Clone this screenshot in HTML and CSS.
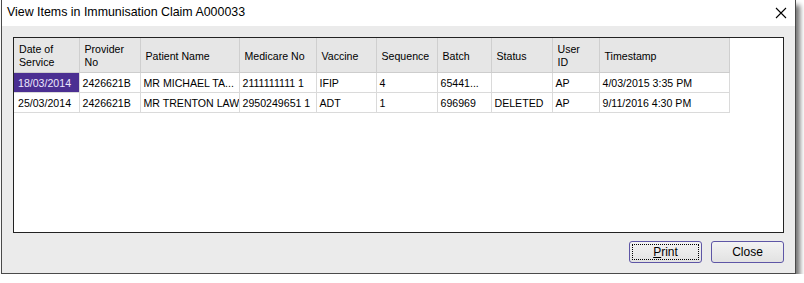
FILE: index.html
```html
<!DOCTYPE html>
<html>
<head>
  <title>View Items in Immunisation Claim A000033</title>
  <link rel="stylesheet" href="styles.css">
</head>
<body>
  <div id="window">
    <div id="titlebar">
      <span class="title">View Items in Immunisation Claim A000033</span>
      <svg class="close-x" width="12" height="12" viewBox="0 0 12 12">
        <path d="M1 1 L11 11 M11 1 L1 11" stroke="#000" stroke-width="1.1" fill="none"/>
      </svg>
    </div>
    <div id="client">
      <div id="list">
        <table id="items">
          <colgroup>
            <col style="width:65px"><col style="width:61px"><col style="width:99px"><col style="width:77px">
            <col style="width:60px"><col style="width:61px"><col style="width:54px"><col style="width:61px">
            <col style="width:47px"><col style="width:130px">
          </colgroup>
          <thead>
            <tr>
              <th>Date of<br>Service</th>
              <th>Provider<br>No</th>
              <th>Patient Name</th>
              <th>Medicare No</th>
              <th>Vaccine</th>
              <th>Sequence</th>
              <th>Batch</th>
              <th>Status</th>
              <th>User<br>ID</th>
              <th>Timestamp</th>
            </tr>
          </thead>
          <tbody>
            <tr>
              <td class="selected">18/03/2014</td>
              <td>2426621B</td>
              <td>MR MICHAEL TA...</td>
              <td>2111111111 1</td>
              <td>IFIP</td>
              <td>4</td>
              <td>65441...</td>
              <td></td>
              <td>AP</td>
              <td>4/03/2015 3:35 PM</td>
            </tr>
            <tr>
              <td>25/03/2014</td>
              <td>2426621B</td>
              <td>MR TRENTON LAW</td>
              <td>2950249651 1</td>
              <td>ADT</td>
              <td>1</td>
              <td>696969</td>
              <td>DELETED</td>
              <td>AP</td>
              <td>9/11/2016 4:30 PM</td>
            </tr>
          </tbody>
        </table>
      </div>
      <div id="buttons">
        <button class="btn focused"><span class="focus-rect"><u>P</u>rint</span></button>
        <button class="btn"><span class="focus-rect">Close</span></button>
      </div>
    </div>
  </div>
</body>
</html>
```

FILE: styles.css
```css
body {
  margin: 0;
  padding: 0;
  background-color: #ffffff;
  font-family: "Liberation Sans", Arial, sans-serif;
}
#window {
  margin-left: 1px;
  width: 793px;
  height: 273px;
  border: 1px solid #4a4a4a;
  border-top: none;
  background-color: #ebebeb;
  box-shadow: 4px 5px 5px rgba(0, 0, 0, 0.55);
  display: flex;
  flex-direction: column;
}
#titlebar {
  height: 26px;
  background-color: #ffffff;
  display: flex;
  align-items: center;
  justify-content: space-between;
  padding: 0 8px 0 5px;
}
.title {
  font-size: 12.4px;
  color: #000000;
  margin-top: -2px;
}
.close-x {
  margin-top: -1px;
}
#client {
  flex: 1;
  padding: 11px 11px 0 11px;
  display: flex;
  flex-direction: column;
}
#list {
  height: 194px;
  border: 1px solid #222222;
  background-color: #ffffff;
}
#items {
  table-layout: fixed;
  border-collapse: collapse;
  width: 715px;
  font-size: 10.6px;
}
#items th {
  height: 32px;
  background-color: #e6e6e6;
  border-right: 1px solid #cfcfcf;
  border-left: 1px solid #f8f8f8;
  border-bottom: 1px solid #cdcdcd;
  font-weight: normal;
  text-align: left;
  vertical-align: middle;
  padding: 2px 5px 0 5px;
  line-height: 13px;
}
#items th:first-child {
  border-left: none;
}
#items td {
  height: 19px;
  border: 1px solid #dadada;
  padding: 0 3px;
  white-space: nowrap;
  overflow: hidden;
}
#items td:first-child {
  border-left: none;
  padding-left: 4px;
}
#items td.selected {
  background-color: #4b2f92;
  color: #ece8ff;
}
#buttons {
  display: flex;
  justify-content: flex-end;
  gap: 9px;
  margin-top: 8px;
}
.btn {
  width: 73px;
  height: 22px;
  padding: 2px;
  border: 1px solid #5e56a6;
  border-radius: 3px;
  background: linear-gradient(#f3f3f3, #e2e2e2);
  font-family: "Liberation Sans", Arial, sans-serif;
  font-size: 12px;
  color: #000000;
  display: flex;
}
.focus-rect {
  flex: 1;
  display: flex;
  align-items: center;
  justify-content: center;
  border: 1px dotted transparent;
}
.btn.focused .focus-rect {
  border-color: #000000;
}
```
